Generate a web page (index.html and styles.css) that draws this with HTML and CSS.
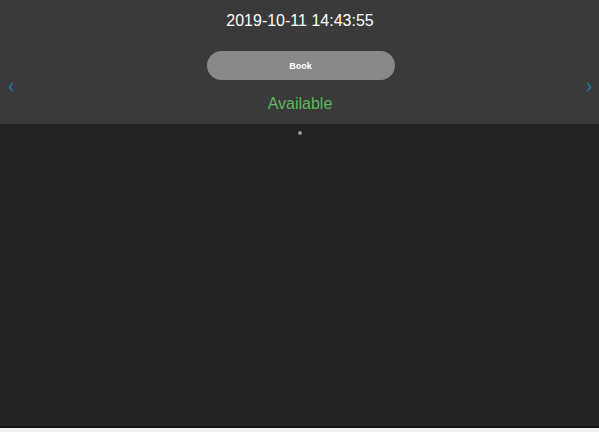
FILE: index.html
```html
<!DOCTYPE html>
<html>
<head>
<meta charset="utf-8">
<link rel="stylesheet" href="styles.css">
</head>
<body>
<div class="page">
  <div class="slide">
    <div class="clock">2019-10-11 14:43:55</div>
    <button class="book">Book</button>
    <div class="status">Available</div>
    <span class="nav nav-prev"><svg width="6" height="10" viewBox="0 0 6 10"><path d="M4.8 1 L1.6 5 L4.8 9" fill="none" stroke="#2a6f9e" stroke-width="1.8"/></svg></span>
    <span class="nav nav-next"><svg width="6" height="10" viewBox="0 0 6 10"><path d="M1.2 1 L4.4 5 L1.2 9" fill="none" stroke="#2a6f9e" stroke-width="1.8"/></svg></span>
  </div>
  <div class="dots"><span class="dot"></span></div>
</div>
</body>
</html>
```
FILE: styles.css
```css
html, body {
  margin: 0;
  padding: 0;
}
body {
  background: #f0f0f0;
  font-family: "Liberation Sans", Arial, sans-serif;
}
.page {
  height: 426px;
  background: #222222;
  border-bottom: 2px solid #161616;
}
.slide {
  position: relative;
  height: 124px;
  background: #3a3a3a;
  display: flex;
  flex-direction: column;
  align-items: center;
  box-sizing: border-box;
  padding-top: 11px;
}
.clock {
  color: #ffffff;
  font-size: 16px;
  line-height: 20px;
  height: 20px;
  padding-left: 1px;
}
.book {
  margin-top: 20px;
  width: 188px;
  height: 29px;
  border: none;
  border-radius: 15px;
  background: #888888;
  color: #ffffff;
  font-family: "Liberation Sans", Arial, sans-serif;
  font-weight: bold;
  font-size: 9px;
  padding: 0;
  margin-left: 2px;
}
.status {
  margin-top: 14px;
  color: #5cb85c;
  font-size: 16px;
  line-height: 20px;
  padding-left: 1px;
}
.nav {
  position: absolute;
  top: 82px;
  display: block;
  line-height: 0;
}
.nav-prev { left: 8px; }
.nav-next { right: 7px; }
.dots {
  display: flex;
  justify-content: center;
  padding-top: 7px;
}
.dot {
  width: 4px;
  height: 4px;
  border-radius: 50%;
  background: #999999;
  margin-left: 1px;
}
```
